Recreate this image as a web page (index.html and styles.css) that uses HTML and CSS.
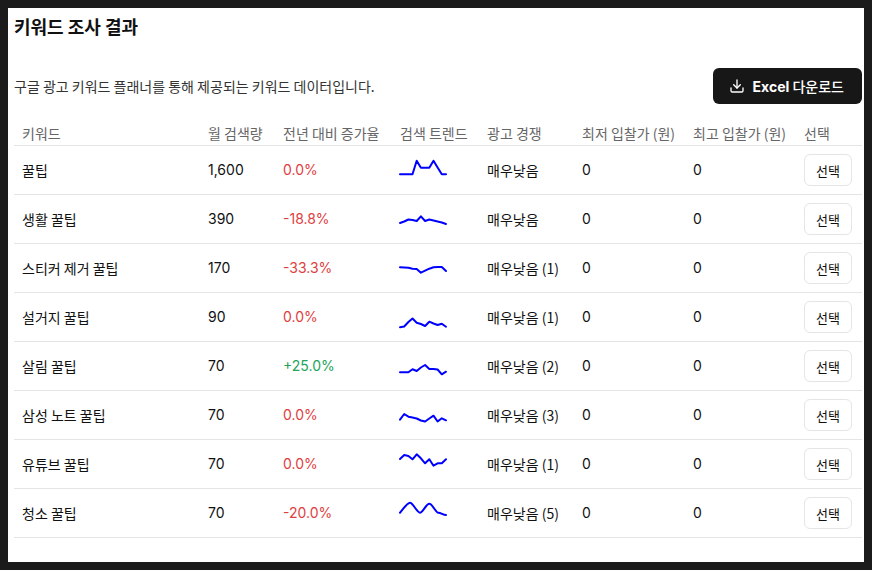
FILE: index.html
```html
<!DOCTYPE html>
<html>
<head>
<meta charset="utf-8">
<title>키워드 조사 결과</title>
<link rel="stylesheet" href="styles.css">
</head>
<body>
<div class="panel">
  <h2 class="title">키워드 조사 결과</h2>
  <div class="toolbar">
    <p class="desc">구글 광고 키워드 플래너를 통해 제공되는 키워드 데이터입니다.</p>
    <button class="btn-excel" type="button">
      <svg class="icon" width="16" height="16" viewBox="0 0 24 24" fill="none" stroke="currentColor" stroke-width="2" stroke-linecap="round" stroke-linejoin="round"><path d="M21 15v4a2 2 0 0 1-2 2H5a2 2 0 0 1-2-2v-4"/><polyline points="7 10 12 15 17 10"/><line x1="12" y1="15" x2="12" y2="3"/></svg>
      <span><span class="en">Excel</span> <span class="ko">다운로드</span></span>
    </button>
  </div>
  <table class="kw-table">
    <colgroup>
      <col class="c-kw"><col class="c-vol"><col class="c-yoy"><col class="c-trend"><col class="c-comp"><col class="c-low"><col class="c-high"><col class="c-sel">
    </colgroup>
    <thead>
      <tr>
        <th>키워드</th><th>월 검색량</th><th>전년 대비 증가율</th><th>검색 트렌드</th><th>광고 경쟁</th><th>최저 입찰가 (원)</th><th>최고 입찰가 (원)</th><th>선택</th>
      </tr>
    </thead>
    <tbody>
      <tr>
        <td>꿀팁</td><td class="num">1,600</td><td class="num neg">0.0%</td>
        <td class="trend"><svg class="spark" width="46" height="32" viewBox="0 0 46 32"><polyline points="0,20.3 4.2,20.3 8.4,20.3 12.5,20.3 16.7,6.7 20.9,13.7 25.1,13.7 29.3,13.7 33.5,6.7 37.6,13.5 41.8,20.3 46,20.3"/></svg></td>
        <td>매우낮음</td><td class="num">0</td><td class="num">0</td><td><button class="btn-select" type="button">선택</button></td>
      </tr>
      <tr>
        <td>생활 꿀팁</td><td class="num">390</td><td class="num neg">-18.8%</td>
        <td class="trend"><svg class="spark" width="46" height="32" viewBox="0 0 46 32"><polyline points="0,20 4.2,18.5 8.4,16.5 12.5,17 16.7,18 20.9,13.3 25.1,18 29.3,16.5 33.5,17.5 37.6,18.5 41.8,19.5 46,21"/></svg></td>
        <td>매우낮음</td><td class="num">0</td><td class="num">0</td><td><button class="btn-select" type="button">선택</button></td>
      </tr>
      <tr>
        <td>스티커 제거 꿀팁</td><td class="num">170</td><td class="num neg">-33.3%</td>
        <td class="trend"><svg class="spark" width="46" height="32" viewBox="0 0 46 32"><polyline points="0,15.3 4.2,15.5 8.4,15.7 12.5,16.8 16.7,17 20.9,20.7 25.1,18.7 29.3,16.7 33.5,15.3 37.6,15 41.8,15 46,19"/></svg></td>
        <td>매우낮음 (1)</td><td class="num">0</td><td class="num">0</td><td><button class="btn-select" type="button">선택</button></td>
      </tr>
      <tr>
        <td>설거지 꿀팁</td><td class="num">90</td><td class="num neg">0.0%</td>
        <td class="trend"><svg class="spark" width="46" height="32" viewBox="0 0 46 32"><polyline points="0,26.3 4.2,25.5 8.4,21 12.5,17.5 16.7,21.7 20.9,23 25.1,25 29.3,20.7 33.5,22.5 37.6,24 41.8,22.7 46,25.7"/></svg></td>
        <td>매우낮음 (1)</td><td class="num">0</td><td class="num">0</td><td><button class="btn-select" type="button">선택</button></td>
      </tr>
      <tr>
        <td>살림 꿀팁</td><td class="num">70</td><td class="num pos">+25.0%</td>
        <td class="trend"><svg class="spark" width="46" height="32" viewBox="0 0 46 32"><polyline points="0,22.3 4.2,22.3 8.4,22.3 12.5,19.3 16.7,21 20.9,17.5 25.1,15 29.3,19 33.5,19 37.6,19.5 41.8,24.3 46,21.7"/></svg></td>
        <td>매우낮음 (2)</td><td class="num">0</td><td class="num">0</td><td><button class="btn-select" type="button">선택</button></td>
      </tr>
      <tr>
        <td>삼성 노트 꿀팁</td><td class="num">70</td><td class="num neg">0.0%</td>
        <td class="trend"><svg class="spark" width="46" height="32" viewBox="0 0 46 32"><polyline points="0,20.7 4.2,15 8.4,17.7 12.5,18.5 16.7,19.5 20.9,21.5 25.1,22.5 29.3,19.5 33.5,16.7 37.6,22.5 41.8,19.3 46,21.3"/></svg></td>
        <td>매우낮음 (3)</td><td class="num">0</td><td class="num">0</td><td><button class="btn-select" type="button">선택</button></td>
      </tr>
      <tr>
        <td>유튜브 꿀팁</td><td class="num">70</td><td class="num neg">0.0%</td>
        <td class="trend"><svg class="spark" width="46" height="32" viewBox="0 0 46 32"><polyline points="0,11 4.2,7 8.4,8 12.5,11.3 16.7,6.3 20.9,10.3 25.1,15.3 29.3,11.3 33.5,17.7 37.6,15.3 41.8,15.3 46,11.3"/></svg></td>
        <td>매우낮음 (1)</td><td class="num">0</td><td class="num">0</td><td><button class="btn-select" type="button">선택</button></td>
      </tr>
      <tr>
        <td>청소 꿀팁</td><td class="num">70</td><td class="num neg">-20.0%</td>
        <td class="trend"><svg class="spark" width="46" height="32" viewBox="0 0 46 32"><path d="M0,15.7 C3,12.5 7,5.7 10,5.7 S17,15.7 20,15.7 S26,6.7 29.3,6.7 S35.5,15.7 38.3,15.7 S43,18 46,18"/></svg></td>
        <td>매우낮음 (5)</td><td class="num">0</td><td class="num">0</td><td><button class="btn-select" type="button">선택</button></td>
      </tr>
    </tbody>
  </table>
</div>
</body>
</html>
```

FILE: styles.css
```css
html { background: #1b1b1b; }
body {
  margin: 8px;
  background: #1b1b1b;
  font-family: "Noto Sans CJK KR", sans-serif;
  color: #111;
}
.panel {
  background: #fff;
  height: 554px;
  overflow: hidden;
  box-sizing: border-box;
  padding: 4px 2px 0 6px;
}
.title {
  margin: 0;
  font-size: 18px;
  line-height: 28px;
  font-weight: 700;
  color: #111;
}
.toolbar {
  display: flex;
  justify-content: space-between;
  align-items: center;
  margin-top: 28px;
}
.desc {
  margin: 0;
  font-size: 14px;
  line-height: 20px;
  color: #333;
}
.btn-excel {
  display: inline-flex;
  align-items: center;
  gap: 8px;
  height: 36px;
  padding: 0 18px 0 16px;
  background: #171717;
  color: #fff;
  border: 0;
  border-radius: 6px;
  font-family: inherit;
  font-size: 14px;
  line-height: 20px;
}
.btn-excel .icon { display: block; }
.btn-excel .en { font-family: Inter, sans-serif; font-weight: 700; }
.btn-excel .ko { font-weight: 500; }
.kw-table {
  margin-top: 17px;
  width: 848px;
  border-collapse: collapse;
  table-layout: fixed;
}
.c-kw { width: 186px; }
.c-vol { width: 75px; }
.c-yoy { width: 117px; }
.c-trend { width: 87px; }
.c-comp { width: 95px; }
.c-low { width: 111px; }
.c-high { width: 111px; }
.c-sel { width: 66px; }
.kw-table th {
  font-weight: 400;
  color: #666;
  text-align: left;
  font-size: 14px;
  line-height: 24px;
  padding: 0 9px 0 8px;
  vertical-align: middle;
  border-bottom: 1px solid #e5e5e5;
}
.kw-table td {
  padding: 8px;
  font-size: 14px;
  line-height: 20px;
  color: #111;
  vertical-align: middle;
  border-bottom: 1px solid #e5e5e5;
  white-space: nowrap;
}
.kw-table td.num { font-family: Inter, sans-serif; }
.kw-table td.neg { color: #e03e3e; }
.kw-table td.pos { color: #22a55b; }
.spark {
  display: block;
  overflow: visible;
}
.spark polyline, .spark path {
  fill: none;
  stroke: #0000ff;
  stroke-width: 2;
  stroke-linejoin: round;
  stroke-linecap: round;
}
.btn-select {
  display: block;
  height: 32px;
  padding: 0 11px;
  background: #fff;
  border: 1px solid #e5e5e5;
  border-radius: 6px;
  font-family: inherit;
  font-size: 13px;
  color: #111;
}
```
